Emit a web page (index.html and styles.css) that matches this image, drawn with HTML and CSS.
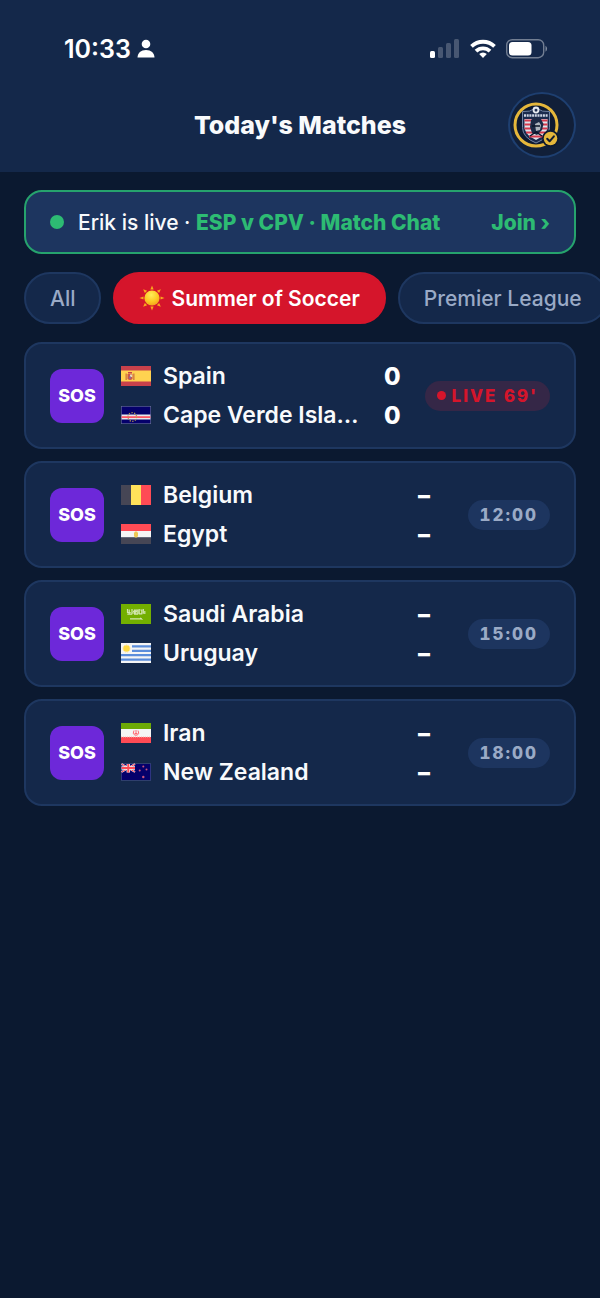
FILE: index.html
```html
<!DOCTYPE html>
<html lang="en">
<head>
  <meta charset="UTF-8" />
  <meta name="viewport" content="width=device-width, initial-scale=1.0"/>
  <title>Today's Matches</title>
  <link rel="stylesheet" href="styles.css">
</head>
<body>
  <header class="top">
    <div class="status-bar">
      <div class="clock">
        <span>10:33</span>
        <svg width="18" height="20" viewBox="0 0 18 20" fill="#fff"><circle cx="9" cy="5" r="4.3"/><path d="M.5 18.6C.5 14 4 11 9 11s8.500 3 8.500 7.600z"/></svg>
      </div>
      <div class="signals">
        <svg width="30" height="20" viewBox="0 0 30 20" fill="#fff"><rect x="0" y="12" width="5" height="7" rx="1.500"/><g opacity=".22"><rect x="8" y="8" width="5" height="11" rx="1.500"/><rect x="16" y="4" width="5" height="15" rx="1.500"/><rect x="24" y="0" width="5" height="19" rx="1.500"/></g></svg>
        <svg width="26" height="20" viewBox="0 0 26 20"><g fill="none" stroke="#fff" stroke-width="3.800"><path d="M1.500 7.400a16.500 16.500 0 0 1 23 0"/><path d="M6 12.200a10 10 0 0 1 14 0"/></g><path d="M13 19l-3.800-3.900a5.400 5.400 0 0 1 7.600 0z" fill="#fff"/></svg>
        <svg class="battery" width="42" height="20" viewBox="0 0 42 20"><rect x=".7" y=".7" width="37" height="18" rx="5.500" fill="none" stroke="#fff" stroke-opacity=".4" stroke-width="1.400"/><rect x="3" y="3" width="22.500" height="13.400" rx="3.500" fill="#fff"/><path d="M39.500 6.800q1.600.9 1.600 3t-1.600 3z" fill="#fff" opacity=".45"/></svg>
      </div>
    </div>
    <div class="title-bar">
      <h1>Today's Matches</h1>
      <button class="profile" aria-label="Profile">
        <svg width="64" height="64" viewBox="0 0 64 64">
          <circle cx="26" cy="32" r="21" fill="#0d1930" stroke="#e5b73b" stroke-width="3"/>
          <path d="M12.500 18.500q7 1 13.500-3.500 6.500 4.500 13.500 3.500v16q0 10-13.500 15.500-13.500-5.500-13.500-15.500z" fill="#1b2b4d" stroke="#7385a5" stroke-width="1"/>
          <path d="M14.500 26h23v9q-1 7-11.500 12-10.500-5-11.500-12z" fill="#dfe3ea"/>
          <path d="M14.500 27.500h23M14.500 31.500h23M14.500 35.500h23M16 39.500h20M19 43.500h14" stroke="#d8394c" stroke-width="2"/>
          <path d="M21 27l4-3 6 2 2.500 5-1.500 6-5 5-5-2-2-6z" fill="#1c2945"/>
          <path d="M25 31l4-2 2 3-1 5-4 1z" fill="#aeb4be"/>
          <path d="M22 33h8M20 43l6-4 6 4" stroke="#0b1428" stroke-width="1.500" fill="none"/>
          <path d="M14 22.500h24" stroke="#cdd4e2" stroke-width="2.500" stroke-dasharray="2 .7"/>
          <circle cx="26" cy="17" r="3.400" fill="#e7ebf1"/>
          <path d="M26 15.500l1.600 1.200-.6 1.800h-2l-.6-1.800z" fill="#1b2b4d"/>
          <circle cx="40.500" cy="45.500" r="8.500" fill="#0d1930"/>
          <circle cx="40.500" cy="45.500" r="6.800" fill="#e5b73b"/>
          <path d="M37.200 45.800l2.400 2.500 4.300-5" fill="none" stroke="#101b30" stroke-width="2" stroke-linecap="round" stroke-linejoin="round"/>
        </svg>
      </button>
    </div>
  </header>

  <main class="content">
    <a class="live-banner" href="#chat">
      <span class="dot"></span>
      <span class="live-text">Erik is live · <strong>ESP v CPV · Match Chat</strong></span>
      <span class="join">Join ›</span>
    </a>

    <nav class="filters">
      <button class="chip">All</button>
      <button class="chip active">
        <svg width="26" height="26" viewBox="0 0 26 26">
          <defs>
            <radialGradient id="sun" cx=".45" cy=".3" r=".75"><stop offset="0" stop-color="#ffed58"/><stop offset=".6" stop-color="#fcc822"/><stop offset="1" stop-color="#f19a1d"/></radialGradient>
          </defs>
          <g fill="#fba81d">
            <path id="ray" d="M13 .5l1.600 4h-3.200z"/>
            <use href="#ray" transform="rotate(45 13 13)"/><use href="#ray" transform="rotate(90 13 13)"/><use href="#ray" transform="rotate(135 13 13)"/><use href="#ray" transform="rotate(180 13 13)"/><use href="#ray" transform="rotate(225 13 13)"/><use href="#ray" transform="rotate(270 13 13)"/><use href="#ray" transform="rotate(315 13 13)"/>
          </g>
          <circle cx="13" cy="13" r="7.600" fill="url(#sun)"/>
        </svg>
        <span>Summer of Soccer</span>
      </button>
      <button class="chip">Premier League</button>
    </nav>

    <section class="matches">
      <article class="match">
        <div class="badge">SOS</div>
        <div class="teams">
          <div class="team">
            <svg class="flag" viewBox="0 0 30 20"><path fill="#c8414b" d="M0 0h30v20H0z"/><path fill="#ffd250" d="M0 4.500h30v11H0z"/><path fill="#d0763c" d="M4.500 7.500h1.300v6.500H4.500zM12.200 7.500h1.300v6.500h-1.300z"/><path fill="#c9574b" d="M6.500 8h5v5q-2.500 2-5 0z"/><path fill="#e9dcb5" d="M9 8.500h2.200V11H9z"/><path fill="#8b6a9a" d="M8 10.500h2v2H8z"/><path fill="#c8414b" d="M7 6h4v1.500H7z"/></svg>
            <span class="name">Spain</span>
            <span class="score">0</span>
          </div>
          <div class="team">
            <svg class="flag" viewBox="0 0 30 20"><path fill="#6b7294" d="M0 1h30v18H0z"/><path fill="#05006b" d="M.6 1.600h28.800v16.800H.6z"/><path fill="#e6e7ee" d="M.6 9.500h28.800v5H.6z"/><path fill="#ff5565" d="M.6 11.200h28.800v1.800H.6z"/><circle cx="11.300" cy="12" r="4.300" fill="none" stroke="#b79a4c" stroke-width="1.300" stroke-dasharray="1.200 1.500"/></svg>
            <span class="name">Cape Verde Islands</span>
            <span class="score">0</span>
          </div>
        </div>
        <div class="status"><span class="pill live">LIVE 69'</span></div>
      </article>

      <article class="match">
        <div class="badge">SOS</div>
        <div class="teams">
          <div class="team">
            <svg class="flag" viewBox="0 0 30 20"><path fill="#464655" d="M0 0h10v20H0z"/><path fill="#ffe15a" d="M10 0h10v20H10z"/><path fill="#ff4b55" d="M20 0h10v20H20z"/></svg>
            <span class="name">Belgium</span>
            <span class="score">–</span>
          </div>
          <div class="team">
            <svg class="flag" viewBox="0 0 30 20"><path fill="#ff4b55" d="M0 0h30v7H0z"/><path fill="#f5f5f5" d="M0 7h30v6.500H0z"/><path fill="#464655" d="M0 13.500h30V20H0z"/><path fill="#edc855" d="M14 7.500h2l1 1.500v3l-1 1.500h-2L13 12V9z"/></svg>
            <span class="name">Egypt</span>
            <span class="score">–</span>
          </div>
        </div>
        <div class="status"><span class="pill">12:00</span></div>
      </article>

      <article class="match">
        <div class="badge">SOS</div>
        <div class="teams">
          <div class="team">
            <svg class="flag" viewBox="0 0 30 20"><path fill="#73af00" d="M0 0h30v20H0z"/><g fill="none" stroke="#d3e6b0" stroke-width="1.200"><path d="M6.500 5v3.500h3.200M8.200 5.500v4.300M6.300 10.200h5M11 5v4h2.500V5.500M14.800 10V6h2v4M18.200 5v4.800h2.600V6h-1.500M22.300 5v4.700M23.800 7v3M12 7.300h4M13 10.200h4"/><path d="M9 14.800h12M19 14l2.500 1.600"/></g></svg>
            <span class="name">Saudi Arabia</span>
            <span class="score">–</span>
          </div>
          <div class="team">
            <svg class="flag" viewBox="0 0 30 20"><path fill="#f5f5f5" d="M0 0h30v20H0z"/><path stroke="#5b8ddb" stroke-width="2.200" d="M11 3.400h19M11 7.800h19M0 12.200h30M0 16.600h30"/><circle cx="5.500" cy="5.500" r="3.300" fill="#ffda44"/><circle cx="5.500" cy="5.500" r="3.600" fill="none" stroke="#ffe58a" stroke-dasharray="1 1"/></svg>
            <span class="name">Uruguay</span>
            <span class="score">–</span>
          </div>
        </div>
        <div class="status"><span class="pill">15:00</span></div>
      </article>

      <article class="match">
        <div class="badge">SOS</div>
        <div class="teams">
          <div class="team">
            <svg class="flag" viewBox="0 0 30 20"><path fill="#f5f5f5" d="M0 0h30v20H0z"/><path fill="#6daa06" d="M0 0h30v6H0z"/><path fill="#ff4b55" d="M0 14h30v6H0z"/><path stroke="#f6b5ae" stroke-dasharray="1 1" d="M0 14h30"/><path fill="none" stroke="#ff6872" d="M13 7.500q-2 3 1 5M17 7.500q2 3-1 5M15 7v6M13.500 10.500h3"/></svg>
            <span class="name">Iran</span>
            <span class="score">–</span>
          </div>
          <div class="team">
            <svg class="flag" viewBox="0 0 30 20"><path fill="#4b5790" d="M0 1.500h30v17H0z"/><path fill="#05006b" d="M.6 2h28.800v16H.6z"/><path stroke="#e8e9f2" stroke-width="2" d="M.6 2L14 10M14 2L.6 10"/><path stroke="#ff4b55" d="M.6 2L14 10M14 2L.6 10"/><path stroke="#f5f5f5" stroke-width="3.400" d="M7.300 2v8.500M.6 6H14"/><path stroke="#ff4b55" stroke-width="2" d="M7.300 2v8.500M.6 6H14"/><g fill="#c9547c"><circle cx="22.300" cy="4.500" r="1"/><circle cx="18.700" cy="8.500" r="1"/><circle cx="25.500" cy="7.500" r="1"/><circle cx="22.300" cy="15" r="1.200"/></g></svg>
            <span class="name">New Zealand</span>
            <span class="score">–</span>
          </div>
        </div>
        <div class="status"><span class="pill">18:00</span></div>
      </article>
    </section>
  </main>
</body>
</html>
```
FILE: styles.css
```css
* {
  box-sizing: border-box;
}

body {
  margin: 0;
  min-height: 100vh;
  overflow-x: hidden;
  background-color: #0b1930;
  color: #f8fafc;
  font-family: Inter, "Liberation Sans", sans-serif;
}

button {
  font: inherit;
  color: inherit;
  cursor: pointer;
}

svg {
  display: block;
  flex-shrink: 0;
}

.top {
  background-color: #14284a;
}

.status-bar {
  display: flex;
  justify-content: space-between;
  align-items: center;
  height: 84px;
  padding: 14px 52px 0 64px;
}

.clock {
  display: flex;
  align-items: center;
  gap: 6px;
  font-size: 25px;
  font-weight: 600;
  color: #fff;
}

.signals {
  display: flex;
  align-items: center;
  gap: 10px;
}

.title-bar {
  display: grid;
  grid-template-columns: 1fr auto 1fr;
  align-items: center;
  height: 88px;
  padding: 0 24px 6px;
}

h1 {
  grid-column: 2;
  margin: 0;
  font-size: 25px;
  font-weight: 800;
}

.profile {
  justify-self: end;
  display: flex;
  align-items: center;
  justify-content: center;
  width: 68px;
  height: 66px;
  padding: 0;
  border: 2px solid #1e3f70;
  border-radius: 50%;
  background-color: #111f38;
}

.content {
  padding: 18px 24px;
}

.live-banner {
  display: flex;
  align-items: center;
  height: 64px;
  padding: 0 24px;
  border: 2px solid #26a36d;
  border-radius: 18px;
  background-color: #1d355f;
  color: #f8fafc;
  font-size: 21px;
  font-weight: 500;
  text-decoration: none;
}

.dot {
  width: 14px;
  height: 14px;
  margin-right: 14px;
  border-radius: 50%;
  background-color: #2dbb73;
}

.live-text {
  flex: 1;
  white-space: nowrap;
}

.live-text strong,
.join {
  color: #2dbb73;
  font-weight: 800;
}

.filters {
  display: flex;
  gap: 12px;
  margin: 18px -24px 18px 0;
  overflow: hidden;
}

.chip {
  display: flex;
  flex-shrink: 0;
  align-items: center;
  gap: 6px;
  height: 52px;
  padding: 0 24px;
  border: 2px solid #1e3760;
  border-radius: 26px;
  background-color: #14284a;
  color: #9aaac6;
  font-size: 21px;
  font-weight: 500;
}

.chip.active {
  border-color: #d5152b;
  background-color: #d5152b;
  color: #fff;
  font-weight: 600;
}

.matches {
  display: flex;
  flex-direction: column;
  gap: 12px;
}

.match {
  display: flex;
  align-items: center;
  padding: 16px 24px;
  border: 2px solid #1e3760;
  border-radius: 18px;
  background-color: #14284a;
}

.badge {
  display: flex;
  flex-shrink: 0;
  align-items: center;
  justify-content: center;
  width: 54px;
  height: 54px;
  margin-right: 17px;
  border-radius: 12px;
  background-color: #6d28d9;
  color: #fff;
  font-size: 18px;
  font-weight: 800;
}

.teams {
  display: flex;
  flex: 1;
  flex-direction: column;
  gap: 7px;
  min-width: 0;
}

.team {
  display: flex;
  align-items: center;
  height: 32px;
}

.flag {
  width: 30px;
  height: 20px;
  margin-right: 12px;
}

.name {
  flex: 1;
  overflow: hidden;
  font-size: 23px;
  font-weight: 600;
  line-height: 32px;
  text-overflow: ellipsis;
  white-space: nowrap;
}

.score {
  min-width: 40px;
  color: #fff;
  font-size: 24px;
  font-weight: 800;
  text-align: right;
}

.status {
  display: flex;
  justify-content: flex-end;
  min-width: 96px;
  margin-left: 24px;
}

.pill {
  display: flex;
  align-items: center;
  height: 30px;
  padding: 0 12px;
  border-radius: 15px;
  background-color: #1d355f;
  color: #9aaac6;
  font-size: 17px;
  font-weight: 800;
  font-variant-numeric: tabular-nums;
  letter-spacing: 2px;
}

.pill.live {
  background-color: #352747;
  color: #d5152b;
}

.pill.live::before {
  content: "";
  width: 9px;
  height: 9px;
  margin-right: 6px;
  border-radius: 50%;
  background-color: #d5152b;
}
```
